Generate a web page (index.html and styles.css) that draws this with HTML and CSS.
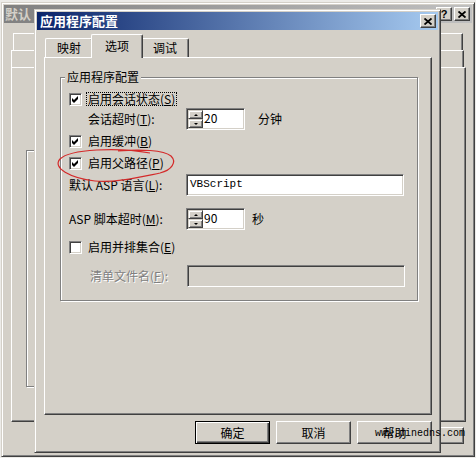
FILE: index.html
```html
<!doctype html>
<html lang="zh-CN">
	<head>
		<meta charset="UTF-8" />
		<meta name="viewport" content="width=device-width, initial-scale=1.0" />
		<title>应用程序配置</title>
		<link rel="stylesheet" href="styles.css">
	</head>
	<body>
		<div class="desk">
			<!-- window behind (mostly covered by the dialog) -->
			<div class="win back">
				<div class="caption">
					<span class="cap-text short">默认</span>
					<span class="cap-btns">
						<span class="cap-btn help">?</span>
						<span class="cap-btn">
							<svg width="8" height="7" viewBox="0 0 8 7"><path d="M0.5 0.5 L7.5 6.5 M7.5 0.5 L0.5 6.5" stroke="#000" stroke-width="1.8" fill="none" /></svg>
						</span>
					</span>
				</div>
				<div class="btabs">
					<div class="btab-row r1">
						<div class="btab"></div>
						<div class="btab"></div>
						<div class="btab"></div>
						<div class="btab"></div>
						<div class="btab"></div>
					</div>
					<div class="btab-row r2">
						<div class="btab"></div>
						<div class="btab"></div>
						<div class="btab"></div>
						<div class="btab"></div>
						<div class="btab"></div>
					</div>
				</div>
				<div class="panel back-panel">
					<div class="etched back-group"></div>
				</div>
				<div class="btns back-btns">
					<span class="btn"></span>
				</div>
			</div>

			<!-- active dialog -->
			<div class="win front">
				<div class="caption">
					<span class="cap-text">应用程序配置</span>
					<span class="cap-btns">
						<span class="cap-btn">
							<svg width="8" height="7" viewBox="0 0 8 7"><path d="M0.5 0.5 L7.5 6.5 M7.5 0.5 L0.5 6.5" stroke="#000" stroke-width="1.8" fill="none" /></svg>
						</span>
					</span>
				</div>
				<div class="tabs">
					<div class="tab">映射</div>
					<div class="tab sel">选项</div>
					<div class="tab">调试</div>
				</div>
				<div class="panel">
					<div class="etched group">
						<span class="legend">应用程序配置</span>

						<div class="row r-session">
							<span class="check"><svg width="7" height="7" viewBox="0 0 7 7"><polygon points="0,2 2,4 6,0 6,3 2,7 0,5" fill="#000" /></svg></span>
							<span class="cb-label focus">启用会话状态(<u>S</u>)</span>
						</div>
						<div class="row field r-timeout">
							<span class="lbl indent">会话超时(<u>T</u>):</span>
							<span class="spin">
								<span class="arrows"><span class="arrow"><i class="up"></i></span><span class="arrow"><i class="down"></i></span></span>
								<span class="val">20</span>
							</span>
							<span class="unit">分钟</span>
						</div>
						<div class="row r-buffer">
							<span class="check"><svg width="7" height="7" viewBox="0 0 7 7"><polygon points="0,2 2,4 6,0 6,3 2,7 0,5" fill="#000" /></svg></span>
							<span class="cb-label">启用缓冲(<u>B</u>)</span>
						</div>
						<div class="row r-parent">
							<span class="check"><svg width="7" height="7" viewBox="0 0 7 7"><polygon points="0,2 2,4 6,0 6,3 2,7 0,5" fill="#000" /></svg></span>
							<span class="cb-label">启用父路径(<u>P</u>)</span>
						</div>
						<div class="row field r-lang">
							<span class="lbl">默认 ASP 语言(<u>L</u>):</span>
							<span class="edit wide"><span class="mono">VBScript</span></span>
						</div>
						<div class="row field r-script">
							<span class="lbl">ASP 脚本超时(<u>M</u>):</span>
							<span class="spin">
								<span class="arrows"><span class="arrow"><i class="up"></i></span><span class="arrow"><i class="down"></i></span></span>
								<span class="val">90</span>
							</span>
							<span class="unit sec">秒</span>
						</div>
						<div class="row r-side">
							<span class="check"></span>
							<span class="cb-label">启用并排集合(<u>E</u>)</span>
						</div>
						<div class="row field r-manifest">
							<span class="lbl indent2 disabled">清单文件名(<u>F</u>):</span>
							<span class="edit wide off"></span>
						</div>
					</div>
				</div>
				<div class="btns">
					<span class="btn default">确定</span>
					<span class="btn">取消</span>
					<span class="btn">帮助</span>
				</div>
			</div>

			<svg class="ink" width="476" height="458" viewBox="0 0 476 458">
				<path d="M150 153 C118 147 70 149 60 159 C52 168 70 178 95 181 C115 183 140 177 160 173 C172 170 177 162 171 156 C164 150 140 149 118 151" stroke="#d42a2a" stroke-width="1.2" fill="none" />
			</svg>
			<div class="watermark">www.dinedns.com</div>
		</div>
	</body>
</html>
```

FILE: styles.css
```css
* {
	box-sizing: border-box;
}
body {
	margin: 0;
	width: 476px;
	height: 458px;
	overflow: hidden;
	background: #d4d0c8;
	font-family: "Noto Sans CJK SC", "Liberation Sans", sans-serif;
	font-size: 12px;
	line-height: 14px;
	color: #000;
}
.desk {
	position: relative;
	width: 476px;
	height: 458px;
	background: #ecebe8;
}

/* windows */
.win {
	position: absolute;
	display: flex;
	flex-direction: column;
	background: #d4d0c8;
	border: 1px solid;
	border-color: #d4d0c8 #404040 #404040 #d4d0c8;
	box-shadow: inset 1px 1px 0 #fff, inset -1px -1px 0 #808080;
	padding: 2px;
}
.back {
	left: 1px;
	top: 2px;
	width: 474px;
	height: 455px;
}
.front {
	left: 34px;
	top: 9px;
	width: 407px;
	height: 444px;
}
.caption {
	display: flex;
	align-items: center;
	height: 18px;
	flex: none;
	padding-left: 3px;
	font-weight: bold;
	font-size: 13px;
	line-height: 18px;
	color: #fff;
	background: linear-gradient(to right, #0a246a, #a6caf0);
}
.back .caption {
	padding-left: 1px;
	color: #d4d0c8;
	background: linear-gradient(to right, #808080, #c0c0c0);
}
.cap-text {
	flex: 1;
	white-space: nowrap;
}
.cap-btns {
	display: flex;
	gap: 2px;
	margin-right: 2px;
}
.cap-btn {
	display: flex;
	align-items: center;
	justify-content: center;
	width: 16px;
	height: 14px;
	background: #d4d0c8;
	border: 1px solid;
	border-color: #fff #404040 #404040 #fff;
	box-shadow: inset -1px -1px 0 #808080;
	color: #000;
	font-family: "Liberation Sans", sans-serif;
	font-size: 11px;
	line-height: 12px;
	font-weight: bold;
}

/* tabs */
.tabs {
	display: flex;
	align-items: flex-end;
	height: 22px;
	margin: 5px 0 0 8px;
	flex: none;
}
.tab {
	display: flex;
	align-items: center;
	justify-content: center;
	width: 48px;
	height: 19px;
	border: 1px solid;
	border-bottom: 0;
	border-color: #fff #404040 #fff #fff;
	border-radius: 2px 2px 0 0;
	box-shadow: inset -1px 0 0 #808080;
	background: #d4d0c8;
}
.tab.sel {
	position: relative;
	z-index: 1;
	width: 52px;
	height: 24px;
	margin: 0 -2px -1px;
	padding-bottom: 2px;
}
.panel {
	flex: none;
	height: 358px;
	margin: 0 6px 0 7px;
	border: 1px solid;
	border-color: #fff #404040 #404040 #fff;
	box-shadow: inset -1px -1px 0 #808080;
	padding: 19px 13px 0 15px;
}

/* group box */
.etched {
	position: relative;
	border: 1px solid #808080;
	box-shadow: inset 1px 1px 0 #fff, 1px 1px 0 #fff;
}
.group {
	padding: 14px 0 13px 8px;
}
.legend {
	position: absolute;
	top: -8px;
	left: 4px;
	padding: 0 2px;
	background: #d4d0c8;
}
.row {
	display: flex;
	align-items: center;
	height: 14px;
}
.row.field {
	height: 22px;
}
.r-timeout { margin-top: 2px; }
.r-buffer { margin-top: 4px; }
.r-parent { margin-top: 8px; }
.r-lang { margin-top: 4px; }
.r-script { margin-top: 12px; }
.r-side { margin-top: 10px; }
.r-manifest { margin-top: 11px; }

.check {
	display: flex;
	align-items: center;
	justify-content: center;
	flex: none;
	width: 13px;
	height: 13px;
	background: #fff;
	border: 1px solid;
	border-color: #808080 #fff #fff #808080;
	box-shadow: inset 1px 1px 0 #404040, inset -1px -1px 0 #d4d0c8;
}
.cb-label {
	margin-left: 4px;
	padding: 0 1px;
	border: 1px dotted transparent;
	line-height: 12px;
	white-space: nowrap;
}
.cb-label.focus {
	border-color: #000;
}
.lbl {
	flex: none;
	width: 117px;
	white-space: nowrap;
}
.lbl.indent {
	margin-left: 19px;
	width: 98px;
}
.lbl.indent2 {
	margin-left: 21px;
	width: 97px;
}
.disabled {
	color: #808080;
	text-shadow: 1px 1px 0 #fff;
}

/* edit fields */
.spin,
.edit {
	display: flex;
	height: 22px;
	background: #fff;
	border: 1px solid;
	border-color: #808080 #fff #fff #808080;
	box-shadow: inset 1px 1px 0 #404040, inset -1px -1px 0 #d4d0c8;
	padding: 1px;
}
.spin {
	width: 59px;
}
.arrows {
	display: flex;
	flex-direction: column;
	width: 15px;
}
.arrow {
	flex: 1;
	display: flex;
	align-items: center;
	justify-content: center;
	background: #d4d0c8;
	border: 1px solid;
	border-color: #d4d0c8 #404040 #404040 #d4d0c8;
	box-shadow: inset 1px 1px 0 #fff, inset -1px -1px 0 #808080;
}
.arrow i {
	width: 0;
	height: 0;
	border-left: 2px solid transparent;
	border-right: 2px solid transparent;
}
.arrow .up {
	border-bottom: 2px solid #000;
}
.arrow .down {
	border-top: 2px solid #000;
}
.val {
	padding: 1px 0 0 1px;
	line-height: 13px;
}
.unit {
	margin-left: 13px;
}
.unit.sec {
	margin-left: 7px;
}
.edit.wide {
	width: 218px;
	padding: 2px 3px;
}
.edit.off {
	background: #d4d0c8;
}
.mono {
	font-family: "Liberation Mono", monospace;
	font-size: 11px;
	line-height: 14px;
}

/* buttons */
.btns {
	display: flex;
	justify-content: flex-end;
	gap: 6px;
	margin: 6px 6px 0 0;
}
.btn {
	display: flex;
	align-items: center;
	justify-content: center;
	width: 75px;
	height: 23px;
	background: #d4d0c8;
	border: 1px solid;
	border-color: #fff #404040 #404040 #fff;
	box-shadow: inset -1px -1px 0 #808080;
}
.btn.default {
	border-color: #000;
	box-shadow: inset 1px 1px 0 #fff, inset -1px -1px 0 #404040, inset -2px -2px 0 #808080;
}

/* back window parts */
.btabs {
	margin-top: 10px;
	flex: none;
}
.btab-row {
	display: flex;
	height: 17px;
}
.btab-row.r1 {
	margin: 0 9px 0 9px;
}
.btab-row.r2 {
	margin: 0 8px 0 7px;
}
.btab {
	flex: 1;
	border: 1px solid;
	border-bottom: 0;
	border-color: #fff #404040 #fff #fff;
	box-shadow: inset -1px 0 0 #808080;
}
.back-panel {
	height: 355px;
	padding: 82px 0 0 14px;
}
.back-group {
	width: 300px;
	height: 237px;
}
.back-btns {
	margin: 5px 8px 0 0;
}
.back-btns .btn {
	height: 17px;
}

/* overlays */
.ink {
	position: absolute;
	left: 0;
	top: 0;
	pointer-events: none;
}
.watermark {
	position: absolute;
	left: 375px;
	top: 428px;
	font-family: "Liberation Mono", monospace;
	font-size: 10px;
	line-height: 12px;
	color: #000;
}
```
